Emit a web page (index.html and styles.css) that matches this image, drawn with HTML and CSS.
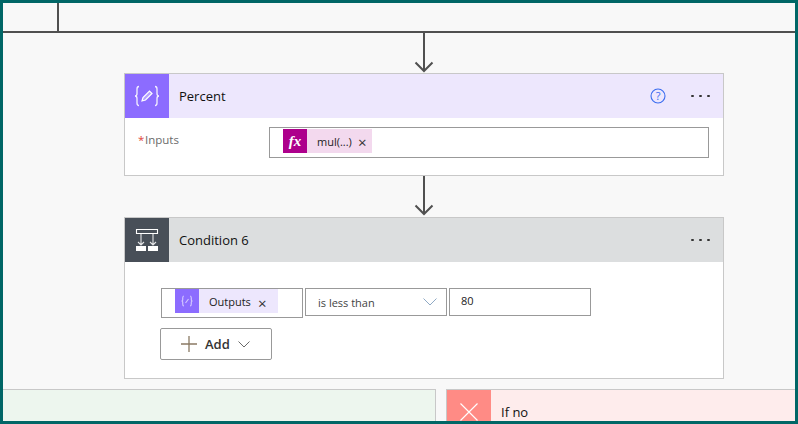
FILE: index.html
```html
<!DOCTYPE html>
<html lang="en">
<head>
<meta charset="utf-8">
<title>Flow</title>
<link rel="stylesheet" href="styles.css">
</head>
<body>
<div class="frame">
  <div class="topbar"><div class="topcell"></div></div>
  <div class="flow">
    <svg class="arrow" width="22" height="40" viewBox="0 0 22 40"><path d="M11 0V38M2.500 29.500L11 38L19.500 29.500" fill="none" stroke="#505050" stroke-width="2"/></svg>
    <section class="card">
      <header class="head head-purple">
        <div class="tile tile-purple">
          <svg width="32" height="32" viewBox="0 0 32 32"><path d="M8 6.500C6.500 6.500 6 7.300 6 9V13.500C6 15 5.200 16 4 16C5.200 16 6 17 6 18.500V23C6 24.700 6.500 25.500 8 25.500M24 6.500C25.500 6.500 26 7.300 26 9V13.500C26 15 26.800 16 28 16C26.800 16 26 17 26 18.500V23C26 24.700 25.500 25.500 24 25.500" fill="none" stroke="#fff" stroke-opacity=".9" stroke-width="1.300"/><path d="M11 21L12 17.500L18.500 11L21 13.500L14.500 20Z" fill="#fff" fill-opacity=".35" stroke="#fff" stroke-width="1.200"/></svg>
        </div>
        <div class="title">Percent</div>
        <svg class="help" width="16" height="16" viewBox="0 0 16 16"><circle cx="8" cy="8" r="7" fill="none" stroke="#3a6cf0" stroke-width="1.100"/><text x="8" y="12" text-anchor="middle" class="help-q">?</text></svg>
        <div class="dots"><i></i><i></i><i></i></div>
      </header>
      <div class="body-percent">
        <div class="label"><span class="req">*</span><span class="label-text">Inputs</span></div>
        <div class="field field-wide">
          <div class="token token-pink">
            <span class="tok-icon tok-fx">fx</span>
            <span class="tok-text tok-text-fx">mul(...)</span>
            <span class="tok-x">×</span>
          </div>
        </div>
      </div>
    </section>
    <svg class="arrow arrow-second" width="22" height="40" viewBox="0 0 22 40"><path d="M11 0V38M2.500 29.500L11 38L19.500 29.500" fill="none" stroke="#505050" stroke-width="2"/></svg>
    <section class="card">
      <header class="head head-grey">
        <div class="tile tile-slate">
          <svg width="32" height="32" viewBox="0 0 32 32"><path d="M5.500 5.500H26.500V9.500H5.500Z" fill="none" stroke="#fff" stroke-width="1.100"/><path d="M10 9.500V21M7 18L10 21L13 18M22 9.500V21M19 18L22 21L25 18" fill="none" stroke="#fff" stroke-opacity=".85" stroke-width="1.100"/><path d="M5 22H15V27H5ZM17 22H27V27H17Z" fill="#fff"/></svg>
        </div>
        <div class="title">Condition 6</div>
        <div class="dots"><i></i><i></i><i></i></div>
      </header>
      <div class="body-cond">
        <div class="cond-row">
          <div class="field field-left">
            <div class="token token-lav">
              <span class="tok-icon tok-var">
                <svg width="14" height="14" viewBox="0 0 14 14"><path d="M4 2C2.800 2 2.700 3 2.700 4V6C2.700 6.500 2.200 7 1.500 7C2.200 7 2.700 7.500 2.700 8V10C2.700 11 2.800 12 4 12M10 2C11.200 2 11.300 3 11.300 4V6C11.300 6.500 11.800 7 12.500 7C11.800 7 11.300 7.500 11.300 8V10C11.300 11 11.200 12 10 12M5.500 9L8.500 5" fill="none" stroke="#fff" stroke-opacity=".6" stroke-width="1.200"/></svg>
              </span>
              <span class="tok-text tok-text-out">Outputs</span>
              <span class="tok-x tok-x-out">×</span>
            </div>
          </div>
          <div class="select">
            <span>is less than</span>
            <svg width="14" height="8" viewBox="0 0 14 8"><path d="M.500 .500L7 7L13.500 .500" fill="none" stroke="#8fa9c4" stroke-width="1"/></svg>
          </div>
          <div class="value">80</div>
        </div>
        <button class="add" type="button">
          <svg width="16" height="16" viewBox="0 0 16 16"><path d="M8 0V16M0 8H16" stroke="#8a7a64" stroke-width="1.300" fill="none"/></svg>
          <span class="add-text">Add</span>
          <svg width="12" height="7" viewBox="0 0 12 7"><path d="M.500 .500L6 6L11.500 .500" fill="none" stroke="#6a6a6a" stroke-width="1"/></svg>
        </button>
      </div>
    </section>
    <div class="branches">
      <div class="branch branch-yes"></div>
      <div class="branch branch-no">
        <div class="tile tile-red">
          <svg width="20" height="20" viewBox="0 0 20 20"><path d="M1.500 1.500L18.500 18.500M18.500 1.500L1.500 18.500" stroke="#fff" stroke-width="1.100" fill="none"/></svg>
        </div>
        <div class="title">If no</div>
      </div>
    </div>
  </div>
</div>
</body>
</html>
```
FILE: styles.css
```css
* { box-sizing: border-box; }
html, body { margin: 0; padding: 0; }
body { width: 798px; height: 424px; overflow: hidden; font-family: "Open Sans", "Liberation Sans", sans-serif; color: #222; }
.frame { width: 798px; height: 424px; border: 3px solid #006666; background: #f8f8f8; overflow: hidden; display: flex; flex-direction: column; }
.topbar { height: 30px; border-bottom: 2px solid #505050; flex: none; }
.topcell { width: 56px; height: 28px; border-right: 2px solid #505050; }
.flow { display: flex; flex-direction: column; align-items: center; flex: 1; }
.arrow { display: block; flex: none; margin-left: 50px; }
.arrow-second { margin-bottom: 1px; }
.card { width: 600px; margin-left: 50px; background: #fff; border: 1px solid #c8c8c8; flex: none; }
.head { height: 44px; display: flex; align-items: center; }
.head-purple { background: #ede7fd; }
.head-grey { background: #dcdedf; }
.tile { width: 44px; height: 44px; flex: none; display: flex; align-items: center; justify-content: center; }
.tile-purple { background: #8c6cff; }
.tile-slate { background: #484f58; }
.tile-red { background: #ff8b85; }
.title { font-size: 13px; line-height: 18px; margin-left: 10px; flex: 1; color: #111; }
.help { flex: none; margin-right: 25px; }
.help-q { font-size: 11px; fill: #3a6cf0; font-family: "Open Sans", sans-serif; }
.dots { display: flex; gap: 5.500px; width: 32px; flex: none; }
.dots i { width: 2.500px; height: 2.500px; border-radius: 50%; background: #333; display: block; }
.body-percent { height: 57px; display: flex; align-items: flex-start; padding: 9px 14px 0 13px; }
.label { font-size: 11.500px; line-height: 16px; width: 131px; color: #6b6b6b; margin-top: 5px; display: flex; }
.req { color: #e0453a; width: 7px; }
.field { border: 1px solid #999; background: #fff; display: flex; align-items: flex-start; }
.field-wide { width: 440px; height: 31px; padding: 1px 13px; }
.token { display: flex; align-items: center; height: 24px; }
.token-pink { background: #f3d9ee; width: 89px; }
.token-lav { background: #ede7fd; width: 103px; }
.tok-icon { width: 24px; height: 24px; flex: none; display: flex; align-items: center; justify-content: center; }
.tok-fx { background: #ad008c; color: #fff; font-family: "Liberation Serif", serif; font-style: italic; font-size: 15px; font-weight: 700; }
.tok-var { background: #8c6cff; }
.tok-text { font-size: 11px; line-height: 16px; color: #222; margin-top: 2px; }
.tok-text-fx { margin-left: 10px; }
.tok-text-out { margin-left: 10px; }
.tok-x { font-size: 15px; line-height: 16px; margin-left: 6px; margin-top: 2px; color: #333; }
.tok-x-out { margin-left: 7px; margin-top: 3px; }
.body-cond { height: 116px; padding: 26px 0 0 36px; }
.cond-row { display: flex; align-items: flex-start; gap: 2px; }
.field-left { width: 142px; height: 30px; padding: 0 13px; }
.select { width: 142px; height: 28px; border: 1px solid #999; display: flex; align-items: center; justify-content: space-between; padding: 0 9px 0 12px; font-size: 11px; color: #444; }
.value { width: 142px; height: 28px; border: 1px solid #999; padding: 0 11px; font-size: 11px; line-height: 24px; color: #222; }
.add { display: flex; align-items: center; width: 112px; height: 32px; margin: 10px 0 0 -1px; padding: 0 0 0 20px; background: #fff; border: 1px solid #999; border-radius: 2px; font-family: inherit; }
.add-text { font-size: 13px; font-weight: 600; color: #333; margin: 0 8px 0 8px; }
.branches { width: 792px; display: flex; justify-content: space-between; margin-top: 10px; flex: 1; align-items: stretch; }
.branch { border: 1px solid #c8c8c8; border-bottom: 0; }
.branch-yes { width: 433px; background: #edf6ee; border-left: 0; }
.branch-no { width: 349px; background: #feecec; border-right: 0; display: flex; align-items: flex-start; }
.branch-no .title { margin-top: 13px; }
```
